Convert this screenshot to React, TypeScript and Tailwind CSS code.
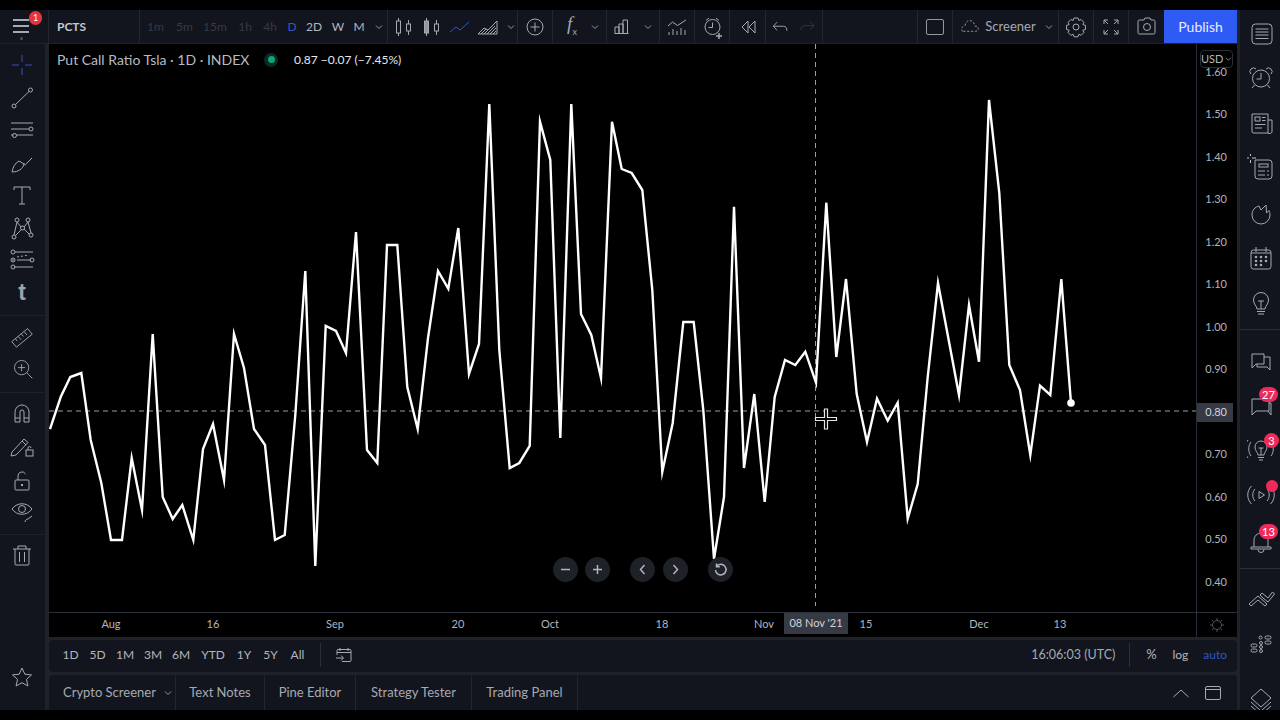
import React from "react";

const pts = "50,429 60.7,397 70.3,377 81.3,373 90.7,440 101.3,483 111,540 122,540 131.7,458 142,510 152.7,334 162.7,497 172.7,519 182.3,505 193.3,540 203,449 213,424 224,480 234,334 244,368 254,429 265,445 275,540 284.7,535 295.3,415 305.3,271 315.3,566 325.7,326 336,331 346,353 356,232 367,450 377.3,463 387,245 397.3,245 407.3,387 417.7,429 428,338 438,271 448.3,288.7 458.3,228 469,374 479,344 489.3,104 499.3,350 509.7,468 519.3,463 529.7,446 540,121.7 550.3,160 560.3,438 571.3,104 581,314 591.3,335 601,378 612,121.7 621.7,169 631.7,173 642.3,190 652.3,290 662.3,472 672.7,423 683.3,322 693.7,322 703.3,410 714,559 724,497 734,206.7 744,468 754.3,394 764.7,502 774.7,397 785,360 795.3,365 805.3,351.7 816,382.7 826.3,202.7 836.3,357 846,279 856.7,394 867,442 877,398.7 887.7,420.7 897.7,402.7 907.7,518.7 917.7,484 927.7,377 938,283 948.3,338 959,395 969,305 979,361.7 989,100 999.3,193 1009.3,365 1020,390 1030.3,455 1040,385.7 1050.3,395 1061.3,279 1071,403";

function I({ children, s = 28, c = "" }: { children: React.ReactNode; s?: number; c?: string }) {
  return (
    <svg width={s} height={s} viewBox="0 0 28 28" fill="none" stroke="currentColor" strokeWidth="1" className={c}>
      {children}
    </svg>
  );
}
const Chev = () => (
  <svg width="8" height="6" viewBox="0 0 8 6" fill="none" stroke="currentColor" strokeWidth="1" className="text-[#9598a1]">
    <path d="M1 1.5l3 3 3-3" />
  </svg>
);

function Cell({ w, children, line = true }: { w: string; children?: React.ReactNode; line?: boolean }) {
  return (
    <div className={`${w} h-full flex items-center justify-center shrink-0 ${line ? "border-r border-[#23262e]" : ""}`}>
      {children}
    </div>
  );
}

const Tool = ({ children }: { children: React.ReactNode }) => (
  <div className="h-[32.5px] shrink-0 flex items-center justify-center text-[#a6a9b2]">{children}</div>
);
const Side = ({ children, badge }: { children: React.ReactNode; badge?: React.ReactNode }) => (
  <div className="h-[45px] shrink-0 flex items-center justify-center text-[#a6a9b2] relative pl-[2px]">
    {children}
    {badge}
  </div>
);
const Badge = ({ t, top, left }: { t: string; top: string; left: string }) => (
  <span className={`absolute ${top} ${left} h-[15px] min-w-[15px] px-[3px] rounded-full bg-[#ee2a5a] text-white text-[11px] leading-[15px] text-center`}>{t}</span>
);

const prices = ["1.60", "1.50", "1.40", "1.30", "1.20", "1.10", "1.00", "0.90", "0.80", "0.70", "0.60", "0.50", "0.40"];
const times: [string, string][] = [["Aug", "w-[124px]"], ["16", "w-[80px]"], ["Sep", "w-[164px]"], ["20", "w-[82px]"], ["Oct", "w-[102px]"], ["18", "w-[122px]"], ["Nov", "w-[82px]"], ["15", "w-[122px]"], ["Dec", "w-[104px]"], ["13", "w-[58px]"]];
const ranges: [string, string][] = [["1D", "w-[27px]"], ["5D", "w-[27px]"], ["1M", "w-[28px]"], ["3M", "w-[28px]"], ["6M", "w-[28px]"], ["YTD", "w-[36px]"], ["1Y", "w-[26px]"], ["5Y", "w-[27px]"], ["All", "w-[27px]"]];

const NavBtn = ({ children, c = "" }: { children: React.ReactNode; c?: string }) => (
  <div className={`w-[25px] h-[25px] rounded-full bg-[#1e2127] flex items-center justify-center text-[#b2b5be] ${c}`}>
    <svg width="15" height="15" viewBox="0 0 15 15" fill="none" stroke="currentColor" strokeWidth="1.5">{children}</svg>
  </div>
);

export default function App() {
  return (
    <div className="w-[1280px] h-[720px] bg-black py-[10px] overflow-hidden text-[#b2b5be]" style={{ fontFamily: "Lato, 'Open Sans', sans-serif" }}>
      <div className="h-[700px] flex bg-[#1f2229] overflow-hidden">
        <div className="w-[1237px] flex flex-col shrink-0">
          {/* top bar */}
          <div className="h-[33px] flex items-center bg-[#12151d] text-[13px] shrink-0">
            <Cell w="w-[49px] relative">
              <div className="flex flex-col items-center gap-[4.500px] text-[#a6a9b2] mt-[6px] mr-[6px]">
                <span className="block w-[16px] h-[1.500px] bg-current" />
                <span className="block w-[16px] h-[1.500px] bg-current" />
                <span className="block w-[16px] h-[1.500px] bg-current" />
                <span className="block w-[3px] h-[3px] rounded-full bg-[#50535e]" />
              </div>
              <span className="absolute top-[1px] left-[29px] w-[13px] h-[14px] rounded-full bg-[#e8333f] text-white text-[9px] leading-[14px] text-center">1</span>
            </Cell>
            <Cell w="w-[91px] justify-start! pl-[8px]"><span className="text-[#c4c7cf] font-bold text-[12px]">PCTS</span></Cell>
            <Cell w="w-[248px] relative">
              <div className="flex items-center w-full text-[12px]">
                <span className="w-[31px] text-center text-[#363a45]">1m</span>
                <span className="w-[27px] text-center text-[#363a45]">5m</span>
                <span className="w-[34px] text-center text-[#363a45]">15m</span>
                <span className="w-[26px] text-center text-[#363a45]">1h</span>
                <span className="w-[24px] text-center text-[#363a45]">4h</span>
                <span className="w-[20px] text-center text-[#2f55c9]">D</span>
                <span className="w-[24px] text-center text-[#b2b5be]">2D</span>
                <span className="w-[24px] text-center text-[#b2b5be]">W</span>
                <span className="w-[18px] text-center text-[#b2b5be]">M</span>
                <span className="ml-[7px]"><Chev /></span>
              </div>
            </Cell>
            <Cell w="w-[130px]">
              <div className="flex items-center text-[#a6a9b2] -ml-[1px]">
                <I><rect x="6.500" y="8" width="4" height="12" /><path d="M8.500 5v3M8.500 20v3M18.500 7v4M18.500 18v4" /><rect x="16.500" y="11" width="4" height="7" /></I>
                <I><rect x="6.500" y="8" width="4" height="12" fill="#9598a1" /><path d="M8.500 5v3M8.500 20v3M18.500 7v4M18.500 18v4" /><rect x="16.500" y="11" width="4" height="7" /></I>
                <I c="text-[#3056d3]"><path d="M4 19l6-5 4 3 9-8" /></I>
                <I><path d="M4 21l6-6 4 2 9-9v13z" /><path d="M7 21l5-5M10 21l5-5M13 21l8-8M16 21l6-6M19 21l3-3" /></I>
                <span className="ml-[5px]"><Chev /></span>
              </div>
            </Cell>
            <Cell w="w-[35px]">
              <svg width="18" height="18" viewBox="0 0 18 18" fill="none" stroke="currentColor" className="text-[#a6a9b2]"><circle cx="9" cy="9" r="8" /><path d="M9 4.500v9M4.500 9h9" /></svg>
            </Cell>
            <Cell w="w-[54px]">
              <span className="text-[#a6a9b2] text-[19px] italic -mt-[4px] -ml-[7px]" style={{ fontFamily: "'Liberation Serif', serif" }}>f</span>
              <span className="text-[#a6a9b2] text-[9px] mt-[10px]">x</span>
              <span className="ml-[14px] -mr-[14px]"><Chev /></span>
            </Cell>
            <Cell w="w-[53px]">
              <div className="flex items-center text-[#a6a9b2] gap-[4px]">
                <svg width="15" height="15" viewBox="0 0 15 15" fill="none" stroke="currentColor"><path d="M1 14.500V8h4v6.500M5 14.500V5h4v9.500M9 14.500V1h4.500v13.500zM.5 14.500h14" /></svg>
                <span className="ml-[11px]"><Chev /></span>
              </div>
            </Cell>
            <Cell w="w-[35px]">
              <I c="text-[#a6a9b2]"><path d="M5 13l4.500-4 5 3.500L23 7M6 22v-3M10 22v-6M14 22v-4M18 22v-7M22 22v-5" /></I>
            </Cell>
            <Cell w="w-[35px]">
              <I c="text-[#a6a9b2] ml-[2px]"><circle cx="13.500" cy="14" r="7.500" /><path d="M13.500 9.500v5H9.500M7 7.500l3-2.500M17 5l3 2.500" /><path d="M20 20v6M17 23h6" strokeWidth="1.500" /></I>
            </Cell>
            <Cell w="w-[36px]">
              <I c="text-[#a6a9b2]"><path d="M14 8l-6 6 6 6zM21 8l-6 6 6 6z" /></I>
            </Cell>
            <Cell w="w-[57px]">
              <div className="flex items-center gap-[3px] -ml-[2px]">
                <I s={24} c="text-[#a6a9b2]"><path d="M10 8l-4 4.500 4 4.500M6 12.500h11c3 0 4 2 4 5" transform="scale(1.05)" /></I>
                <I s={24} c="text-[#363a45]"><path d="M18 8l4 4.500-4 4.500M22 12.500H11c-3 0-4 2-4 5" /></I>
              </div>
            </Cell>
            <div className="w-[95px] h-full border-r border-[#23262e] shrink-0" />
            <Cell w="w-[35px]">
              <div className="w-[18px] h-[16px] rounded-[2px] border border-[#9598a1]" />
            </Cell>
            <Cell w="w-[106px]">
              <div className="flex items-center text-[#a6a9b2] ml-[1px]">
                <I s={24}><path d="M5 19H19.500c2 0 3-1.500 3-3s-1-3-3-3h-1c-.500-4-3-6.500-6-6.500s-5 2.500-5.500 6C4 13 3 15 3 16.500S4 19 5 19z" strokeDasharray="2.500 2" /></I>
                <span className="text-[13px] ml-[2px] text-[#a6a9b2]">Screener</span>
                <span className="ml-[9px]"><Chev /></span>
              </div>
            </Cell>
            <Cell w="w-[35px]">
              <I c="text-[#a6a9b2]"><path d="M12 5h4l.8 2.500 2.300-1 2.800 2.800-1 2.300 2.600.8v4l-2.600.8 1 2.300-2.800 2.800-2.300-1-.8 2.500h-4l-.8-2.500-2.300 1-2.800-2.800 1-2.300-2.600-.8v-4l2.600-.8-1-2.300 2.800-2.800 2.300 1z" /><circle cx="14" cy="14" r="3" /></I>
            </Cell>
            <Cell w="w-[35px]">
              <I c="text-[#a6a9b2]"><path d="M7 11V7h4M7 7l4 4M17 7h4v4M21 7l-4 4M11 21H7v-4M7 21l4-4M21 17v4h-4M21 21l-4-4" /></I>
            </Cell>
            <Cell w="w-[35px]" line={false}>
              <I c="text-[#a6a9b2]"><path d="M8 7h3l1-2h5l1 2h2.500a1.500 1.500 0 0 1 1.500 1.500v11a1.500 1.500 0 0 1-1.500 1.500h-14A1.500 1.500 0 0 1 5 19.500v-11A1.500 1.500 0 0 1 6.500 7z" /><circle cx="14" cy="14" r="3.500" /></I>
            </Cell>
            <div className="w-[73px] h-full bg-[#2f5bf5] text-[#e8ecff] text-[14px] flex items-center justify-center shrink-0">Publish</div>
          </div>

          <div className="flex h-[666px] mt-px">
            {/* left toolbar */}
            <div className="w-[45px] shrink-0 bg-[#12151d] flex flex-col pt-[5px] pb-[17px] pr-[1px] text-[#a6a9b2]">
              <Tool><I c="text-[#2f55c9]"><path d="M14 4v7M14 17v7M4 14h7M17 14h7" /></I></Tool>
              <Tool><I><circle cx="22.500" cy="6" r="2" /><circle cx="6" cy="22" r="2" /><path d="M7.500 20.500l13.500-13" /></I></Tool>
              <Tool><I><path d="M3 7h22M3 13h18M3 19h2.500M8 19h17" /><circle cx="23" cy="13" r="2" /><circle cx="6.500" cy="19.500" r="2" /></I></Tool>
              <Tool><I><path d="M4 23c1-5 3-9 7-11l5 3c-1 5-6 8-12 8zM16 14c0 3 2 2 3 0l5-5" /></I></Tool>
              <Tool><I><path d="M6 9V6h16v3M14 6v17M11 23h6" /></I></Tool>
              <Tool><I><circle cx="9" cy="6" r="2" /><circle cx="20" cy="6" r="2" /><circle cx="14.500" cy="14" r="2" /><circle cx="6" cy="23" r="2" /><circle cx="23" cy="21" r="2" /><path d="M9 8l4 5M20 8l-4 5M6 21l3-13M23 19l-3-11M7.500 21.500l6-6M21 20l-5-5" /></I></Tool>
              <Tool><I><path d="M7 6h18M4 14h2.500M9 14h14M6 21h19" /><circle cx="5" cy="6" r="2" /><circle cx="5" cy="14" r="2" /><circle cx="24" cy="14" r="2" /><circle cx="5" cy="21" r="2" /><path d="M9 11l12-2" strokeDasharray="2 2" /></I></Tool>
              <Tool><span className="text-[23px] font-black text-[#a0a3ac] leading-none" style={{ fontFamily: "'Liberation Sans', sans-serif" }}>t</span></Tool>
              <div className="h-px shrink-0 bg-[#1f2229] mt-[6px] mb-[4px]" />
              <Tool><I s={26}><path d="M3 20L20 6l5 6L8 26zM7 17l2 2.500M10 14.500l3 3.500M13.500 12l2 2.500M16.500 9.500l3 3.500" /></I></Tool>
              <Tool><I s={25}><circle cx="13" cy="13" r="8" /><path d="M19 19l6 6M9 13h8M13 9v8" /></I></Tool>
              <div className="h-px shrink-0 bg-[#1f2229] mt-[7px] mb-[4px]" />
              <Tool><I><path d="M7 23V13a7 7 0 0 1 14 0v10h-5V13a2 2 0 0 0-4 0v10zM7 19h5M16 19h5" /></I></Tool>
              <Tool><I><path d="M4 20L16 7l4 3.500L8 23l-5 1zM14 9l4 4" /><rect x="18" y="18" width="7" height="6" /><path d="M20 18v-2a1.500 1.500 0 0 1 3 0" /></I></Tool>
              <div className="h-[32.5px] shrink-0 flex items-center justify-center text-[#a6a9b2] pt-[5px]"><I><rect x="7" y="13" width="14" height="10" rx="1" /><path d="M10 13V9a4 4 0 0 1 7.500-2" /><path d="M14 17v2" strokeWidth="2" /></I></div>
              <Tool><I><path d="M4 12c5-7 15-7 20 0-5 7-15 7-20 0z" /><circle cx="14" cy="12" r="3.500" /><path d="M17 25c0-2 2-3 3-3l4-3" /></I></Tool>
              <div className="h-px shrink-0 bg-[#1f2229] mt-[7px] mb-[4px]" />
              <Tool><I><path d="M5 8h18M10 8V5h8v3M7 8v15a1 1 0 0 0 1 1h12a1 1 0 0 0 1-1V8M11.500 11v10M16.500 11v10" /></I></Tool>
              <div className="flex-1" />
              <Tool><I><path d="M14 5l2.800 6.200 6.700.7-5 4.500 1.400 6.600L14 19.700 8.100 23l1.400-6.600-5-4.500 6.700-.7z" /></I></Tool>
            </div>

            <div className="ml-[4px] w-[1188px] flex flex-col shrink-0">
              <div className="flex h-[568px] shrink-0">
                {/* chart */}
                <div className="w-[1147px] relative bg-black overflow-hidden">
                  <svg className="absolute inset-0" width="1147" height="568" viewBox="49 44 1147 568" fill="none">
                    <path d="M49 411H1196" stroke="#9a9da5" strokeDasharray="5 4" />
                    <path d="M815.500 44V606" stroke="#9a9da5" strokeDasharray="5 4" />
                    <polyline points={pts} stroke="#fff" strokeWidth="2.400" strokeLinejoin="miter" strokeMiterlimit="8" />
                    <circle cx="1071" cy="403" r="3.800" fill="#fff" />
                    <path d="M824.500 409h3v8.500h9v3h-9v8.500h-3v-8.500h-9v-3h9z" fill="#000" stroke="#e6e6e6" strokeWidth="1.200" />
                  </svg>
                  <div className="absolute left-[8px] top-[6px] flex items-center h-[19px]">
                    <span className="text-[14px] text-[#b8bbc3] w-[193px] whitespace-nowrap">Put Call Ratio Tsla · 1D · INDEX</span>
                    <span className="ml-[14px] w-[14px] h-[14px] rounded-full bg-[#0b2a22] flex items-center justify-center">
                      <span className="w-[7px] h-[7px] rounded-full bg-[#12a27c]" />
                    </span>
                    <span className="ml-[16px] text-[12px] text-[#e6e8ec] whitespace-nowrap">0.87 −0.07 (−7.45%)</span>
                  </div>
                  <div className="absolute left-[504px] top-[513px] flex items-center">
                    <NavBtn><path d="M3 7.500h9" /></NavBtn>
                    <NavBtn c="ml-[7px]"><path d="M3 7.500h9M7.500 3v9" /></NavBtn>
                    <NavBtn c="ml-[20px]"><path d="M9.500 3l-4 4.500 4 4.500" /></NavBtn>
                    <NavBtn c="ml-[8px]"><path d="M5.500 3l4 4.500-4 4.500" /></NavBtn>
                    <NavBtn c="ml-[20px]"><path d="M3.500 4.500a5.300 5.300 0 1 1-1 3.500M3.500 1.500v3.300h3.300" /></NavBtn>
                  </div>
                </div>
                {/* price axis */}
                <div className="w-[41px] relative border-l border-[#2a2e39] bg-black pt-[6.750px] text-[11px] text-[#b2b5be]">
                  {prices.map((p) => (
                    <div key={p} className="h-[42.500px] flex items-center">
                      <span className={p === "0.80" ? "w-[36px] h-[19px] bg-[#363a45] text-[#d1d4dc] flex items-center justify-end pr-[6px]" : "w-[36px] flex justify-end pr-[6px]"}>{p}</span>
                    </div>
                  ))}
                  <div className="absolute left-[3px] top-[6px] w-[33px] h-[18px] rounded-[4px] border border-[#2a2e39] bg-black text-[11px] flex items-center justify-center gap-[2px]">USD<Chev /></div>
                </div>
              </div>

              {/* time axis */}
              <div className="h-[25px] flex bg-black border-t border-[#2a2e39] shrink-0 text-[11px] text-[#b2b5be]">
                <div className="w-[1147px] relative flex items-center pb-[1px]">
                  {times.map(([t, w]) => (
                    <span key={t} className={`${w} text-center shrink-0`}>{t}</span>
                  ))}
                  <div className="absolute left-[735px] top-0 w-[64px] h-[21px] bg-[#363a45] text-[#d1d4dc] flex items-center justify-center whitespace-nowrap">08 Nov '21</div>
                </div>
                <div className="w-[41px] border-l border-[#2a2e39] flex items-center justify-center text-[#50535e]">
                  <svg width="16" height="16" viewBox="0 0 16 16" fill="none" stroke="currentColor"><circle cx="8" cy="8" r="4.500" /><path d="M8 1v2M8 13v2M1 8h2M13 8h2M3 3l1.500 1.500M11.500 11.500L13 13M13 3l-1.500 1.500M4.500 11.500L3 13" /></svg>
                </div>
              </div>

              {/* range bar */}
              <div className="h-[32px] mt-[3px] pb-[2px] bg-[#12151d] rounded-[4px] flex items-center text-[12px] text-[#b2b5be] shrink-0">
                <div className="flex items-center pl-[8px]">
                  {ranges.map(([r, w]) => (
                    <span key={r} className={`${w} text-center shrink-0`}>{r}</span>
                  ))}
                </div>
                <span className="w-px h-[24px] bg-[#2a2e39] ml-[9px]" />
                <span className="ml-[14px] text-[#a6a9b2]">
                  <svg width="18" height="18" viewBox="0 0 18 18" fill="none" stroke="currentColor"><path d="M2 9V4.500a1 1 0 0 1 1-1h12a1 1 0 0 1 1 1v10a1 1 0 0 1-1 1H7M2 6.500h14M5 2v3M13 2v3M1 12h7M6 9.500L8.500 12 6 14.500" /></svg>
                </span>
                <div className="flex-1" />
                <span className="text-[12.500px] text-[#a6a9b2]">16:06:03 (UTC)</span>
                <span className="w-px h-[24px] bg-[#2a2e39] ml-[14px]" />
                <span className="ml-[15px] w-[12px] text-center text-[13px]">%</span>
                <span className="ml-[15px] text-[12px]">log</span>
                <span className="ml-[15px] mr-[10px] text-[12px] text-[#2f55c9]">auto</span>
              </div>

              {/* bottom bar */}
              <div className="h-[35px] mt-[3px] bg-[#12151d] rounded-t-[4px] flex items-center text-[13px] text-[#a6a9b2] shrink-0">
                <div className="w-[127px] h-full flex items-center pl-[14px] border-r border-[#23262e] whitespace-nowrap">Crypto Screener<span className="ml-[8px]"><Chev /></span></div>
                <div className="w-[89px] h-full flex items-center justify-center border-r border-[#23262e]">Text Notes</div>
                <div className="w-[91px] h-full flex items-center justify-center border-r border-[#23262e]">Pine Editor</div>
                <div className="w-[116px] h-full flex items-center justify-center border-r border-[#23262e]">Strategy Tester</div>
                <div className="w-[106px] h-full flex items-center justify-center border-r border-[#23262e]">Trading Panel</div>
                <div className="flex-1" />
                <svg width="18" height="10" viewBox="0 0 18 10" fill="none" stroke="currentColor" className="mr-[15px]"><path d="M1.500 9L9 2l7.500 7" /></svg>
                <svg width="16" height="16" viewBox="0 0 16 16" fill="none" stroke="currentColor" className="mr-[16px]"><rect x=".5" y="1.500" width="15" height="13" rx="1.500" /><path d="M.5 4.500h15" /></svg>
              </div>
            </div>
          </div>
        </div>

        {/* right sidebar */}
        <div className="ml-[3px] w-[40px] shrink-0 bg-[#12151d] flex flex-col overflow-hidden">
          <Side><I><rect x="5" y="5" width="20" height="20" rx="3.500" /><path d="M8.500 10h13M8.500 13h13M8.500 16h13M8.500 19.500h13" /></I></Side>
          <Side><I><circle cx="14" cy="14.500" r="8.500" /><path d="M14 9v6H9.500M4 10a3.500 3.500 0 0 1 5-5M24 10a3.500 3.500 0 0 0-5-5M7.500 21l-2.500 3M20.500 21l2.500 3" /></I></Side>
          <Side><I><path d="M21 24H6a2 2 0 0 1-1-2V5h16v19a2.500 2.500 0 0 0 4-1V11h-4" /><rect x="8" y="8" width="5" height="4" /><path d="M15 8.500h3.500M15 11.500h3.500M8 15.500h10.500M8 19h7" /></I></Side>
          <Side><I><path d="M-2 4h4M5 4h4M3.500 -1v3M3.500 6v3" stroke="#c0c3cb" /><path d="M8 6h14a3 3 0 0 1 3 3v13a3 3 0 0 1-3 3H11a3 3 0 0 1-3-3z" /><rect x="12" y="10" width="9" height="3" /><path d="M11 17h7M20 17h2M11 21h7M20 21h2" /></I></Side>
          <Side><I><path d="M19 6l-5 5-2-4C8 8 5 11 5 16a9 9 0 0 0 18 0c0-2-.500-3.500-1-4.500l-2.500 2.500z" /></I></Side>
          <Side><I><rect x="4" y="6" width="20" height="19" rx="2.500" /><path d="M9 3v5M19 3v5M4 9h20" /><g fill="currentColor" stroke="none"><circle cx="9" cy="13" r="1.300" /><circle cx="14" cy="13" r="1.300" /><circle cx="19" cy="13" r="1.300" /><circle cx="9" cy="17" r="1.300" /><circle cx="14" cy="17" r="1.300" /><circle cx="19" cy="17" r="1.300" /><circle cx="9" cy="21" r="1.300" /><circle cx="14" cy="21" r="1.300" /></g></I></Side>
          <Side><I><path d="M10 20c0-3-3.500-4.500-3.500-9a7.500 7.500 0 0 1 15 0c0 4.500-3.500 6-3.500 9zM10 22.500h8M11 25h6M14 20v-8M11 12h6" /></I></Side>
          <div className="h-[5px] shrink-0 border-b border-[#2a2e39]" />
          <div className="h-[7px] shrink-0" />
          <Side><I><path d="M5 8h12v10H9l-4 4zM17 11h6v13l-3-3H10v-3" /></I></Side>
          <Side badge={<Badge t="27" top="top-[5px]" left="left-[19px]" />}><I><path d="M5 8h17v12H9l-4 4zM22 12h2v12l-3-4" /></I></Side>
          <Side badge={<Badge t="3" top="top-[6px]" left="left-[24px]" />}><I><path d="M11 19c0-2.500-3-4-3-8a6 6 0 0 1 12 0c0 4-3 5.500-3 8zM11 21.500h6M12 24h4M14 19v-7M11.500 12h5M4 6c-3 4-3 10 0 14M1 4c-4 5-4 13 0 18M24 6c3 4 3 10 0 14" /></I></Side>
          <Side badge={<span className="absolute top-[8px] left-[26px] w-[12px] h-[12px] rounded-full bg-[#ee2a5a]" />}><I><path d="M12 10.500l5.500 3.500-5.500 3.500zM8 8c-3 3-3 9 0 12M4.500 5c-5 5-5 13 0 18M20 8c3 3 3 9 0 12M23.500 5c5 5 5 13 0 18" /></I></Side>
          <Side badge={<Badge t="13" top="top-[7px]" left="left-[19px]" />}><I><path d="M7 21V14a7 7 0 0 1 14 0v7M4 21h20v2H4zM11 23.500a3 3 0 0 0 6 0" /></I></Side>
          <div className="h-[7px] shrink-0 border-b border-[#2a2e39]" />
          <div className="h-[7px] shrink-0" />
          <Side><I><path d="M2 19l9-8 9 8-2 2-7-6-7 6zM16 13l-3-3 2-2 6 5 4.500-6 2 2-6.500 8z" /></I></Side>
          <Side><I><rect x="4" y="14" width="6" height="3" rx="1.500" /><rect x="4" y="19" width="6" height="3" rx="1.500" /><circle cx="14" cy="13" r="1.500" /><circle cx="14" cy="17" r="1.500" /><circle cx="14" cy="21" r="1.500" /><rect x="18" y="6" width="6" height="3" rx="1.500" /><rect x="18" y="11" width="6" height="3" rx="1.500" /><circle cx="13.500" cy="7.500" r="1.500" /></I></Side>
          <div className="h-[45px] shrink-0 mt-[11px] flex items-center justify-center text-[#a6a9b2] pl-[2px]"><I><path d="M14 3l10 9-10 9-10-9zM4 16l10 9 10-9M4 20l10 9 10-9" /></I></div>
        </div>
      </div>
    </div>
  );
}
